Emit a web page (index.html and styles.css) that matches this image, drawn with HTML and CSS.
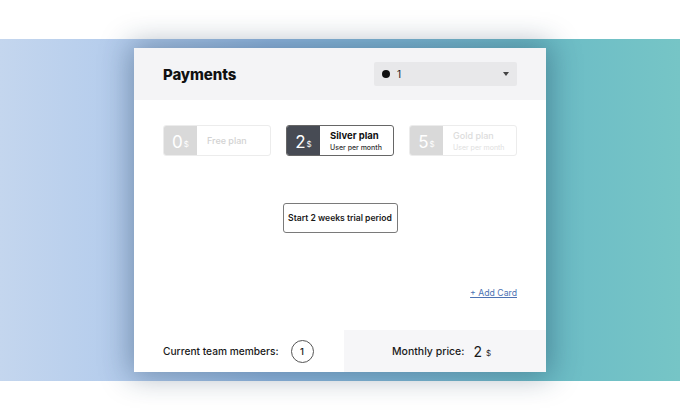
FILE: index.html
```html
<!DOCTYPE html>
<html>
<head>
<meta charset="utf-8">
<link rel="stylesheet" href="styles.css">
</head>
<body>
<div class="top"></div>
<div class="band">
  <div class="card">
    <div class="card-head">
      <div class="title">Payments</div>
      <div class="select">
        <span class="dot"></span>
        <span class="sel-val">1</span>
        <span class="caret"></span>
      </div>
    </div>
    <div class="card-body">
      <div class="plans">
        <div class="plan off">
          <div class="num">0<span class="cur">$</span></div>
          <div class="info"><div class="pname">Free plan</div></div>
        </div>
        <div class="plan on">
          <div class="num">2<span class="cur">$</span></div>
          <div class="info"><div class="pname">Silver plan</div><div class="psub">User per month</div></div>
        </div>
        <div class="plan off gold">
          <div class="num">5<span class="cur">$</span></div>
          <div class="info"><div class="pname">Gold plan</div><div class="psub">User per month</div></div>
        </div>
      </div>
      <div class="trial-row"><button class="trial">Start 2 weeks trial period</button></div>
      <div class="add-row"><a class="add" href="#">+ Add Card</a></div>
    </div>
    <div class="card-foot">
      <div class="members">
        <span class="mlabel">Current team members:</span>
        <span class="circle">1</span>
      </div>
      <div class="price">
        <span class="plabel">Monthly price:</span>
        <span class="pval">2</span><span class="pcur">$</span>
      </div>
    </div>
  </div>
</div>
</body>
</html>
```
FILE: styles.css
```css
* { box-sizing: border-box; }
html, body { margin: 0; padding: 0; background: #fff; }
body { width: 680px; height: 420px; overflow: hidden; font-family: Inter, "Noto Sans", sans-serif; color: #1a1a1a; }
.top { height: 39px; }
.band {
  height: 342px;
  background: linear-gradient(90deg, #c4d6ee 0%, #b2cbec 20%, #93b9e2 40%, #7fb9d6 60%, #6cbcc6 80%, #76c5c6 100%);
  display: flex;
  justify-content: center;
  padding-top: 9px;
}
.card {
  width: 412px;
  height: 324px;
  background: #fff;
  display: flex;
  flex-direction: column;
  box-shadow: 0 0 28px 4px rgba(20, 50, 80, 0.38);
}
.card-head {
  height: 52px;
  background: #f4f4f6;
  display: flex;
  align-items: center;
  justify-content: space-between;
  padding: 0 29px;
}
.title { font-weight: 800; font-size: 15px; letter-spacing: -0.1px; color: #111; }
.select {
  width: 143px;
  height: 24px;
  background: #e8e8ea;
  border-radius: 2px;
  display: flex;
  align-items: center;
  padding: 0 8px 0 8px;
}
.dot { width: 8px; height: 8px; border-radius: 50%; background: #111; }
.sel-val { font-size: 10px; margin-left: 7px; flex: 1; }
.caret { width: 0; height: 0; border-left: 3px solid transparent; border-right: 3px solid transparent; border-top: 4px solid #444; }
.card-body { flex: 1; padding: 25px 29px 0; display: flex; flex-direction: column; }
.plans { display: flex; justify-content: space-between; }
.plan {
  width: 108px;
  height: 31px;
  display: flex;
  border: 1px solid #ececec;
  border-radius: 3px;
  overflow: hidden;
}
.num {
  width: 33px;
  background: #d9d9d9;
  color: #fff;
  font-size: 17px;
  display: flex;
  align-items: center;
  justify-content: center;
  padding-top: 2px;
}
.cur { font-size: 8px; margin-left: 1px; margin-top: 5px; }
.info { display: flex; flex-direction: column; justify-content: center; padding-left: 10px; }
.pname { font-size: 9px; color: #d2d2d2; font-weight: 500; }
.psub { font-size: 7px; color: #e0e0e0; margin-top: 2px; }
.gold .pname { color: #dcdcdc; }
.plan.on { border-color: #666; }
.plan.on .num { background: #474b54; }
.plan.on .pname { color: #111; font-weight: 700; font-size: 9.5px; }
.plan.on .psub { color: #333; font-weight: 500; }
.trial-row { display: flex; justify-content: center; margin-top: 47px; }
.trial {
  width: 115px;
  height: 30px;
  background: #fff;
  border: 1px solid #7a7a7a;
  border-radius: 3px;
  font-family: inherit;
  font-size: 8.6px;
  font-weight: 600;
  color: #1a1a1a;
  padding: 0;
}
.add-row { display: flex; justify-content: flex-end; margin-top: 55px; }
.add { font-size: 8.7px; color: #4d72b3; text-decoration: underline; }
.card-foot { height: 42px; display: flex; }
.members { width: 210px; display: flex; align-items: center; padding-left: 29px; }
.mlabel { font-size: 10.2px; font-weight: 500; }
.circle {
  width: 23px; height: 23px; border: 1px solid #555; border-radius: 50%;
  display: flex; align-items: center; justify-content: center;
  font-size: 9.5px; font-weight: 500; margin-left: 12px;
}
.price { flex: 1; background: #f6f6f8; display: flex; align-items: center; padding-left: 48px; }
.plabel { font-size: 10.5px; font-weight: 500; }
.pval { font-size: 14px; margin-left: 9px; }
.pcur { font-size: 8px; margin-left: 4px; margin-top: 3px; }
```
